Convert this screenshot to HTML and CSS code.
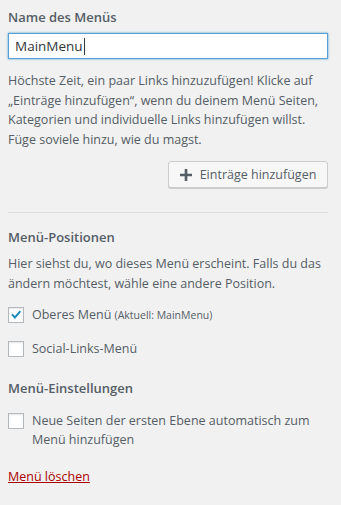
FILE: index.html
```html
<!DOCTYPE html>
<html lang="de">
<head>
    <meta charset="UTF-8" />
    <meta name="viewport" content="width=device-width, initial-scale=1.0">
    <title>Menü</title>
    <link rel="stylesheet" href="styles.css">
</head>
<body>
    <div class="menu-panel">
        <h3 class="section-title">Name des Menüs</h3>
        <div class="name-field">MainMenu<span class="caret"></span></div>

        <p class="hint">Höchste Zeit, ein paar Links hinzuzufügen! Klicke auf „Einträge hinzufügen“, wenn du deinem Menü Seiten, Kategorien und individuelle Links hinzufügen willst. Füge soviele hinzu, wie du magst.</p>

        <div class="button-row">
            <button class="add-btn" type="button">
                <svg class="plus" width="12" height="12" viewBox="0 0 12 12"><path d="M4.7 0h2.6v4.7H12v2.6H7.3V12H4.7V7.3H0V4.7h4.7z" fill="#555d66"/></svg>
                Einträge hinzufügen
            </button>
        </div>

        <hr class="divider">

        <h3 class="section-title">Menü-Positionen</h3>
        <p class="hint tight">Hier siehst du, wo dieses Menü erscheint. Falls du das ändern möchtest, wähle eine andere Position.</p>

        <label class="check-row">
            <span class="box">
                <svg width="16" height="16" viewBox="0 0 16 16"><path d="M3.2 8.1l1.5-1.4 2.2 2.3 4.6-5.6 1.6 1.3-6.1 7.3z" fill="#1e8cbe"/></svg>
            </span>
            <span>Oberes Menü <small>(Aktuell: MainMenu)</small></span>
        </label>
        <label class="check-row">
            <span class="box"></span>
            <span>Social-Links-Menü</span>
        </label>

        <h3 class="section-title settings">Menü-Einstellungen</h3>
        <label class="check-row">
            <span class="box"></span>
            <span>Neue Seiten der ersten Ebene automatisch zum Menü hinzufügen</span>
        </label>

        <a class="delete-link" href="#">Menü löschen</a>
    </div>
</body>
</html>
```

FILE: styles.css
```css
* {
    box-sizing: border-box;
}

body {
    margin: 0;
    background: #f1f1f1;
    font-family: 'Open Sans', 'Noto Sans', sans-serif;
    color: #555d66;
    font-size: 12.5px;
}

.menu-panel {
    width: 320px;
    margin-left: 8px;
    padding-top: 7px;
}

.section-title {
    margin: 0;
    font-size: 13px;
    font-weight: 600;
    line-height: 20px;
    color: #555d66;
}

.name-field {
    margin-top: 6px;
    height: 26px;
    border: 1px solid #5b9dd9;
    box-shadow: 0 0 2px rgba(30, 140, 190, 0.8);
    background: white;
    padding: 0 6px;
    font-size: 13.5px;
    line-height: 24px;
    color: #32373c;
    display: flex;
    align-items: center;
}

.caret {
    display: inline-block;
    width: 1px;
    height: 17px;
    background: #32373c;
    margin-left: 1px;
}

.hint {
    margin: 12px 0 0;
    line-height: 19.5px;
}

.hint.tight {
    margin-top: 7px;
}

.button-row {
    display: flex;
    justify-content: flex-end;
    margin-top: 12px;
}

.add-btn {
    height: 27px;
    width: 160px;
    display: flex;
    align-items: center;
    justify-content: center;
    gap: 8px;
    white-space: nowrap;
    background: #f7f7f7;
    border: 1px solid #cccccc;
    border-radius: 3px;
    box-shadow: 0 1px 0 #cccccc;
    font-family: inherit;
    font-size: 12.5px;
    color: #555d66;
    padding: 0 8px;
}

.divider {
    border: none;
    border-top: 1px solid #dddddd;
    margin: 24px 0 14px;
}

.check-row {
    display: flex;
    align-items: flex-start;
    gap: 8px;
    line-height: 19.5px;
    margin-top: 12px;
}

.check-row + .check-row {
    margin-top: 13.5px;
}

.settings + .check-row {
    margin-top: 13px;
}

.box {
    flex: none;
    width: 16px;
    height: 16px;
    margin-top: 2px;
    border: 1px solid #b4b9be;
    background: white;
    box-shadow: inset 0 1px 2px rgba(0, 0, 0, 0.1);
    display: flex;
}

.box svg {
    margin: -1px;
}

.check-row small {
    font-size: 10.5px;
}

.settings {
    margin-top: 19px;
}

.delete-link {
    display: inline-block;
    margin-top: 18px;
    color: #a00;
    text-decoration: underline;
}
```
